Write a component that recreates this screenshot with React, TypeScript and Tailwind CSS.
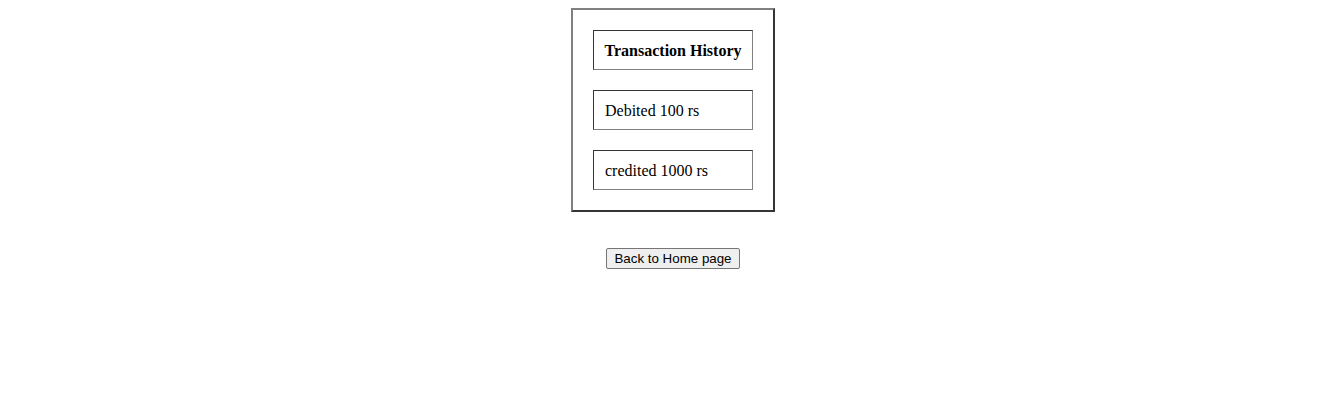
export default function App() {
  const rows = ['Debited 100 rs', 'credited 1000 rs'];

  return (
    <div className="w-full pt-[8px] pl-[12px] flex flex-col items-center" style={{ fontFamily: '"Liberation Serif", serif' }}>
      {/* history table */}
      <div className="flex flex-col gap-[20px] p-[20px] border-2 border-t-[#808080] border-l-[#808080] border-b-[#353535] border-r-[#353535] text-[16px] text-black">
        <div className="w-[160px] h-[40px] flex items-center justify-center pt-[2px] font-bold border border-t-[#353535] border-l-[#353535] border-b-[#808080] border-r-[#808080]">
          Transaction History
        </div>
        {rows.map((r) => (
          <div
            key={r}
            className="w-[160px] h-[40px] flex items-center pl-[11px] pt-[2px] border border-t-[#353535] border-l-[#353535] border-b-[#808080] border-r-[#808080]"
          >
            {r}
          </div>
        ))}
      </div>

      <button
        type="button"
        className="mt-[36px] h-[21px] px-[7px] bg-[#efefef] border border-[#767676] rounded-[2px] text-[13.33px] leading-none text-black"
        style={{ fontFamily: '"Liberation Sans", Arial, sans-serif' }}
      >
        Back to Home page
      </button>
    </div>
  );
}
